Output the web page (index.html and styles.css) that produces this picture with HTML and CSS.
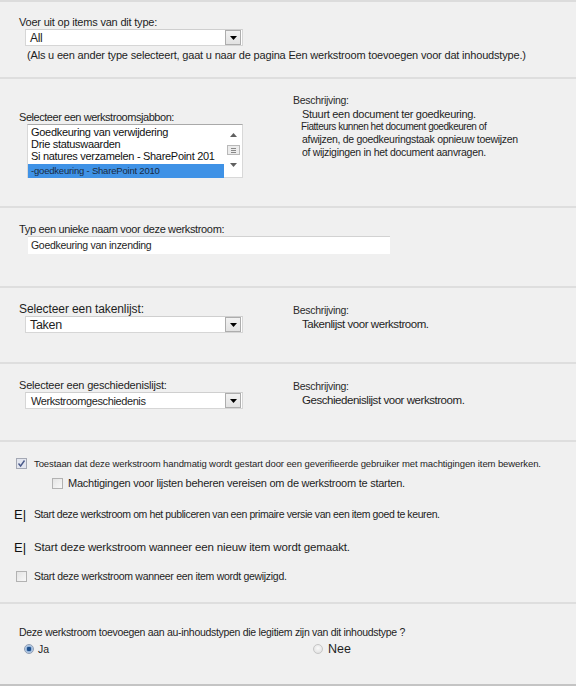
FILE: index.html
```html
<!DOCTYPE html>
<html lang="nl">
<head>
<meta charset="utf-8">
<title>Werkstroom toevoegen</title>
<link rel="stylesheet" href="styles.css">
</head>
<body>
<div class="page">
  <section class="sec s1">
    <div class="lbl">Voer uit op items van dit type:</div>
    <div class="select sel-top">
      <span class="val">All</span>
      <span class="btn"><svg width="7" height="4" viewBox="0 0 7 4"><path d="M0 0H7L3.5 4Z" fill="#000"/></svg></span>
    </div>
    <div class="note">(Als u een ander type selecteert, gaat u naar de pagina Een werkstroom toevoegen voor dat inhoudstype.)</div>
  </section>

  <section class="sec s2 two">
    <div class="left">
      <div class="lbl l-sjab">Selecteer een werkstroomsjabbon:</div>
      <div class="listbox">
        <div class="items">
          <div class="item">Goedkeuring van verwijdering</div>
          <div class="item">Drie statuswaarden</div>
          <div class="item">Si natures verzamelen - SharePoint 201</div>
          <div class="item selected">-goedkeuring - SharePoint 2010</div>
        </div>
        <div class="scroll">
          <svg width="7" height="4" viewBox="0 0 7 4"><path d="M0 4H7L3.5 0Z" fill="#606060"/></svg>
          <span class="thumb"><i></i><i></i><i></i></span>
          <svg width="7" height="4" viewBox="0 0 7 4"><path d="M0 0H7L3.5 4Z" fill="#606060"/></svg>
        </div>
      </div>
    </div>
    <div class="right">
      <div class="dlbl">Beschrijving:</div>
      <div class="desc big">Stuurt een document ter goedkeuring.</div>
      <div class="desc small">Fiatteurs kunnen het document goedkeuren of</div>
      <div class="desc mid">afwijzen, de goedkeuringstaak opnieuw toewijzen</div>
      <div class="desc mid">of wijzigingen in het document aanvragen.</div>
    </div>
  </section>

  <section class="sec s3">
    <div class="lbl l-naam">Typ een unieke naam voor deze werkstroom:</div>
    <div class="textbox">Goedkeuring van inzending</div>
  </section>

  <section class="sec s4 two">
    <div class="left">
      <div class="lbl l-taak">Selecteer een takenlijst:</div>
      <div class="select">
        <span class="val big">Taken</span>
        <span class="btn"><svg width="7" height="4" viewBox="0 0 7 4"><path d="M0 0H7L3.5 4Z" fill="#000"/></svg></span>
      </div>
    </div>
    <div class="right">
      <div class="dlbl">Beschrijving:</div>
      <div class="dval">Takenlijst voor werkstroom.</div>
    </div>
  </section>

  <section class="sec s5 two">
    <div class="left">
      <div class="lbl">Selecteer een geschiedenislijst:</div>
      <div class="select">
        <span class="val small">Werkstroomgeschiedenis</span>
        <span class="btn"><svg width="7" height="4" viewBox="0 0 7 4"><path d="M0 0H7L3.5 4Z" fill="#000"/></svg></span>
      </div>
    </div>
    <div class="right">
      <div class="dlbl">Beschrijving:</div>
      <div class="dval">Geschiedenislijst voor werkstroom.</div>
    </div>
  </section>

  <section class="sec s6">
    <div class="opt o1">
      <span class="cb checked"><svg width="9" height="9" viewBox="0 0 9 9"><path d="M1.5 4.5L3.6 7L7.5 1.5" fill="none" stroke="#4a5a8a" stroke-width="1.4"/></svg></span>
      <span class="t">Toestaan dat deze werkstroom handmatig wordt gestart door een geverifieerde gebruiker met machtigingen item bewerken.</span>
    </div>
    <div class="opt o2">
      <span class="cb"></span>
      <span class="t">Machtigingen voor lijsten beheren vereisen om de werkstroom te starten.</span>
    </div>
    <div class="opt o3">
      <span class="ei">E|</span>
      <span class="t">Start deze werkstroom om het publiceren van een primaire versie van een item goed te keuren.</span>
    </div>
    <div class="opt o4">
      <span class="ei">E|</span>
      <span class="t">Start deze werkstroom wanneer een nieuw item wordt gemaakt.</span>
    </div>
    <div class="opt o5">
      <span class="cb"></span>
      <span class="t">Start deze werkstroom wanneer een item wordt gewijzigd.</span>
    </div>
  </section>

  <section class="sec s7">
    <div class="lbl q">Deze werkstroom toevoegen aan au-inhoudstypen die legitiem zijn van dit inhoudstype ?</div>
    <div class="radios">
      <label class="radio r-ja"><span class="rb on"></span><span class="rt">Ja</span></label>
      <label class="radio r-nee"><span class="rb"></span><span class="rt large">Nee</span></label>
    </div>
  </section>
</div>
</body>
</html>
```
FILE: styles.css
```css
* { box-sizing: border-box; }
html, body { margin: 0; padding: 0; }
body {
  background: #f0f0f0;
  font-family: "Liberation Sans", Arial, sans-serif;
  font-size: 11px;
  color: #1e1e1e;
}
.page {
  width: 576px;
  border-top: 2px solid #dcdcdc;
  border-bottom: 2px solid #c4c4c4;
}
.sec {
  border-bottom: 2px solid #dedede;
  padding-left: 19px;
}
.s7 { border-bottom: none; }
.two {
  display: grid;
  grid-template-columns: 274px 1fr;
  align-items: start;
}
.lbl {
  line-height: 14px;
  height: 14px;
  white-space: nowrap;
  letter-spacing: -0.2px;
}
.l-sjab { letter-spacing: -0.45px; }
.l-naam { letter-spacing: -0.35px; }
.l-taak { font-size: 12px; letter-spacing: -0.1px; }

/* section 1 */
.s1 { height: 77px; padding-top: 13px; }
.select {
  margin-left: 6px;
  width: 218px;
  height: 17px;
  background: #fff;
  border: 1px solid #d6d6d6;
  border-top-color: #cfcfcf;
  display: flex;
  align-items: center;
  justify-content: space-between;
}
.select .val {
  padding-left: 4px;
  font-size: 12px;
  letter-spacing: -0.3px;
}
.select .val.big { font-size: 12.5px; }
.select .val.small { padding-left: 5px; font-size: 11px; letter-spacing: -0.4px; }
.select .btn {
  width: 16px;
  height: 15px;
  margin-right: 1px;
  border: 1px solid #adadad;
  background: linear-gradient(#f2f2f2, #e2e2e2);
  display: flex;
  align-items: center;
  justify-content: center;
}
.note {
  margin-top: 2px;
  margin-left: 8px;
  line-height: 14px;
  white-space: nowrap;
  font-size: 11px;
  letter-spacing: -0.18px;
}

/* section 2 */
.s2 { height: 129px; padding-top: 14px; }
.s2 .left { padding-top: 17px; }
.listbox {
  margin-left: 8px;
  width: 216px;
  height: 54px;
  background: #fff;
  border: 1px solid #d8d8d8;
  border-top-color: #a9a9a9;
  display: flex;
}
.items { flex: 1; padding-top: 1px; min-width: 0; }
.item {
  height: 12px;
  line-height: 12px;
  padding-left: 3px;
  font-size: 11px;
  letter-spacing: -0.3px;
  white-space: nowrap;
  color: #111;
}
.item.selected {
  margin-top: 2px;
  height: 14px;
  line-height: 14px;
  background: #3f92e6;
  font-size: 9.5px;
  letter-spacing: -0.2px;
  color: #1a2a40;
}
.scroll {
  width: 18px;
  display: flex;
  flex-direction: column;
  align-items: center;
  justify-content: space-between;
  padding: 8px 0 10px;
}
.thumb {
  width: 13px;
  height: 10px;
  border: 1px solid #b9b9b9;
  background: #ececec;
  display: flex;
  flex-direction: column;
  justify-content: center;
  gap: 1px;
  padding: 0 3px;
}
.thumb i { display: block; height: 1px; background: #888; }

.dlbl {
  line-height: 14px;
  font-size: 10.5px;
  letter-spacing: -0.3px;
  color: #2a2a2a;
}
.desc { white-space: nowrap; line-height: 12.5px; }
.desc.big { margin-left: 9px; margin-top: 1px; font-size: 11px; letter-spacing: -0.3px; }
.desc.small { margin-left: 8px; font-size: 10px; letter-spacing: -0.45px; }
.desc.mid { margin-left: 9px; font-size: 10.5px; letter-spacing: -0.3px; }
.dval {
  margin-left: 9px;
  line-height: 14px;
  font-size: 11.5px;
  letter-spacing: -0.45px;
}

/* section 3 */
.s3 { height: 80px; padding-top: 14px; }
.textbox {
  margin-left: 9px;
  width: 362px;
  height: 18px;
  background: #fff;
  border-top: 1px solid #d2d2d2;
  padding-left: 3px;
  line-height: 17px;
  font-size: 10.5px;
  letter-spacing: -0.3px;
}

/* sections 4, 5 */
.s4 { height: 76px; padding-top: 14px; }
.s5 { height: 78px; padding-top: 14px; }
.s4 .right, .s5 .right { padding-top: 1px; }

/* section 6 */
.s6 { height: 162px; padding-left: 16px; padding-top: 15px; }
.opt { display: flex; align-items: center; white-space: nowrap; }
.o1 { height: 12px; }
.o2 { height: 12px; margin-top: 8px; margin-left: 36px; }
.o3 { height: 14px; margin-top: 18px; margin-left: -2px; }
.o4 { height: 16px; margin-top: 18px; margin-left: -2px; }
.o5 { height: 12px; margin-top: 15px; }
.cb {
  width: 11px;
  height: 11px;
  border: 1px solid #b2b2b2;
  background: linear-gradient(135deg, #e4e4e4, #f8f8f8);
  display: inline-flex;
  align-items: center;
  justify-content: center;
  flex: none;
}
.cb.checked { background: #e3e6ef; border-color: #a4a8b4; }
.t { margin-left: 7px; font-size: 10px; letter-spacing: -0.2px; }
.o1 .t { font-size: 9.5px; letter-spacing: -0.1px; }
.o2 .t { margin-left: 5px; font-size: 11px; letter-spacing: -0.25px; }
.o3 .t { margin-left: 6px; font-size: 10.5px; letter-spacing: -0.4px; }
.o4 .t { margin-left: 6px; font-size: 11.5px; letter-spacing: -0.15px; }
.o5 .t { font-size: 10.5px; letter-spacing: -0.3px; }
.ei { font-size: 13px; color: #111; width: 14px; letter-spacing: 0; font-weight: 300; }

/* section 7 */
.s7 { height: 80px; padding-top: 21px; }
.q { font-size: 10.5px; letter-spacing: -0.3px; }
.radios { display: flex; margin-top: 3px; height: 14px; align-items: center; }
.radio { display: flex; align-items: center; }
.r-ja { margin-left: 5px; width: 289px; }
.rb {
  width: 10px;
  height: 10px;
  border-radius: 50%;
  border: 1px solid #c6c6c6;
  background: radial-gradient(circle at 50% 40%, #fafafa, #dcdcdc);
}
.rb.on {
  border-color: #8f9db3;
  background: radial-gradient(circle, #1d4f8c 0 2px, #8fb0d8 2.5px, #dfe7f1 5px);
}
.rt { margin-left: 4px; font-size: 10.5px; }
.rt.large { margin-left: 5px; font-size: 12.5px; }
```
